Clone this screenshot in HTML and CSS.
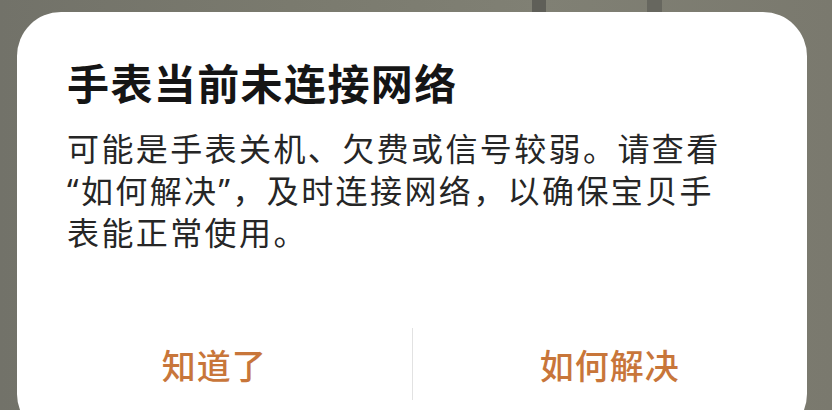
FILE: index.html
```html
<!DOCTYPE html>
<html lang="zh-CN">
<head>
    <meta charset="UTF-8">
    <meta name="viewport" content="width=device-width, initial-scale=1.0">
    <title>手表当前未连接网络</title>
    <link rel="stylesheet" href="styles.css">
</head>
<body>
    <div class="mask">
        <div class="dialog">
            <h2 class="title">手表当前未连接网络</h2>
            <p class="desc">可能是手表关机、欠费或信号较弱。请查看“如何解决”，及时连接网络，以确保宝贝手表能正常使用。</p>
            <div class="btns">
                <a class="btn">知道了</a>
                <span class="line"></span>
                <a class="btn">如何解决</a>
            </div>
        </div>
    </div>
</body>
</html>
```

FILE: styles.css
```css
*{
    margin: 0;
    padding: 0;
    box-sizing: border-box;
    text-decoration: none;
}
html,body{
    height: 100%;
    overflow: hidden;
}
body{
    font-family: "Noto Sans", "Noto Sans CJK SC", sans-serif;
    /* 背景里模糊的桌面 */
    background:
        linear-gradient(90deg, transparent 532px, #5f5f58 532px, #5f5f58 546px, transparent 546px,
            transparent 647px, #67675f 647px, #67675f 662px, transparent 662px) no-repeat 0 0 / 100% 12px,
        linear-gradient(90deg, #727269, #7a7a6e 35%, #808074 65%, #7a796e);
}
.mask{
    padding: 12px 25px 0 17px;
}
.dialog{
    width: 790px;
    background: #fff;
    border-radius: 44px;
    padding: 46px 0 28px;
}
.dialog .title{
    padding: 0 50px;
    font-size: 42px;
    line-height: 52px;
    font-weight: 700;
    letter-spacing: 1.4px;
    color: #151515;
}
.dialog .desc{
    margin-top: 18px;
    padding: 0 78px 0 50px;
    font-size: 32px;
    line-height: 42px;
    letter-spacing: 2.4px;
    color: #262626;
}
.btns{
    display: flex;
    align-items: center;
    height: 92px;
    margin-top: 64px;
}
.btns .btn{
    flex: 1;
    text-align: center;
    font-size: 34px;
    font-weight: 500;
    letter-spacing: 1px;
    color: #c8763a;
}
.btns .line{
    width: 1px;
    align-self: stretch;
    margin: 10px 0;
    background: #e2e2e2;
}
```
